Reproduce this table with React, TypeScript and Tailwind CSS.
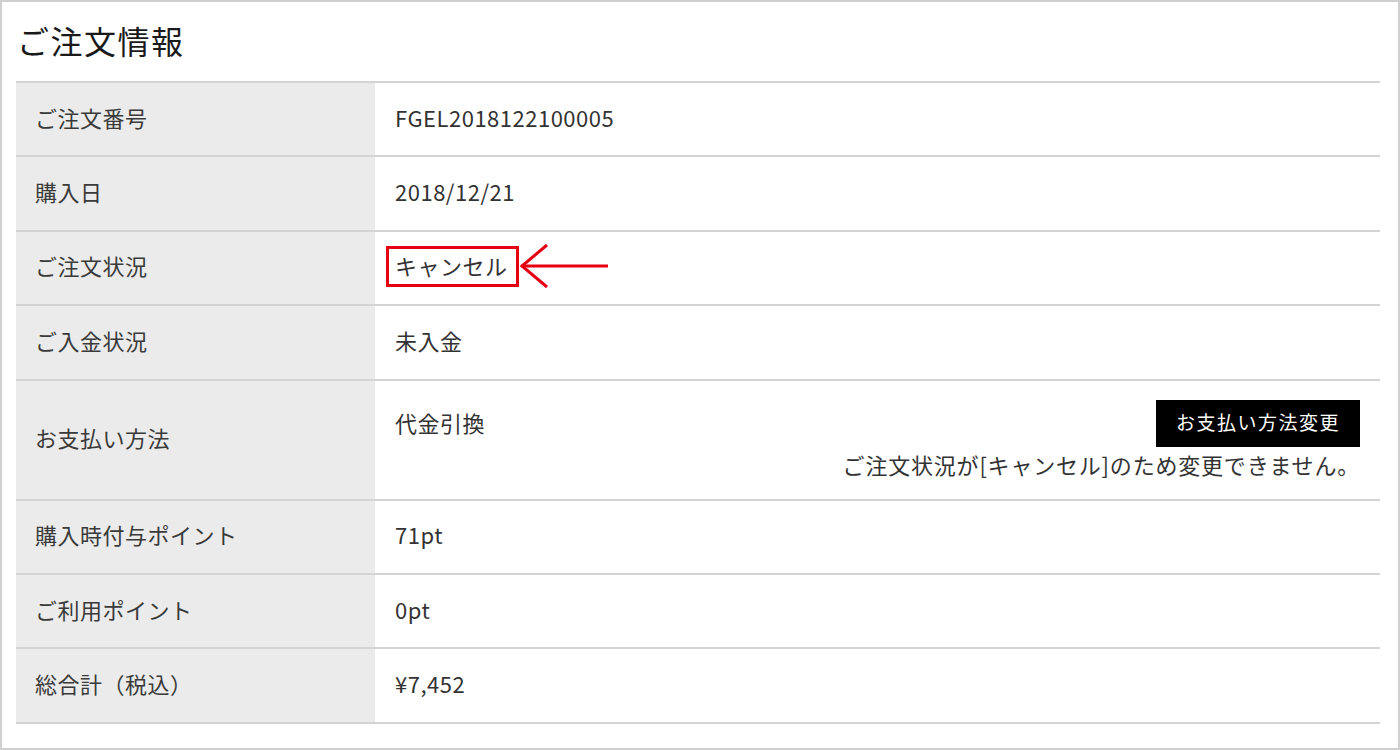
import React from "react";

const rows: { label: string; value: React.ReactNode; kind?: string }[] = [
  { label: "ご注文番号", value: "FGEL2018122100005" },
  { label: "購入日", value: "2018/12/21" },
  { label: "ご注文状況", value: "cancel", kind: "cancel" },
  { label: "ご入金状況", value: "未入金" },
  { label: "お支払い方法", value: "代金引換", kind: "pay" },
  { label: "購入時付与ポイント", value: "71pt" },
  { label: "ご利用ポイント", value: "0pt" },
  { label: "総合計（税込）", value: "¥7,452" },
];

function Row({ label, value, kind }: { label: string; value: React.ReactNode; kind?: string }) {
  const h = kind === "pay" ? "h-[120px]" : "h-[74.4px]";
  return (
    <div className={`flex ${h} border-b-2 border-[#d4d4d4]`}>
      <div className="w-[359px] shrink-0 bg-[#ebebeb] flex items-center pl-[19px] pb-[4px] text-[#3a3a3a]">{label}</div>
      {kind === "cancel" ? (
        <div className="flex-1 flex items-center pl-[20px] pb-[3px]">
          <span className="-ml-[9px] border-[3px] border-[#e50012] pl-[6px] pr-[8px] pt-[2px] pb-[4px] leading-[29px]">キャンセル</span>
          <svg width="94" height="46" viewBox="0 0 94 46" className="-ml-[2px]">
            <path d="M4 23 L91 23" stroke="#e50012" strokeWidth="3" fill="none" />
            <path d="M30 2 L5 23 L30 44" stroke="#e50012" strokeWidth="3" fill="none" />
          </svg>
        </div>
      ) : kind === "pay" ? (
        <div className="flex-1 flex justify-between pl-[20px] pr-[20px] pt-[19px]">
          <div className="leading-[45px]">{value}</div>
          <div className="flex flex-col items-end">
            <div className="bg-black text-white w-[204px] h-[47px] flex items-center justify-center pb-[2px] text-[19px] tracking-[1.5px]">お支払い方法変更</div>
            <div className="mt-[3px] leading-[28px] tracking-[0.8px]">ご注文状況が[キャンセル]のため変更できません。</div>
          </div>
        </div>
      ) : (
        <div className="flex-1 flex items-center pl-[20px] pb-[4px]">{value}</div>
      )}
    </div>
  );
}

export default function App() {
  return (
    <div
      className="w-[1400px] h-[750px] border-2 border-[#d0d0d0] bg-white text-[#333] text-[22px] tracking-[0.5px]"
      style={{ fontFamily: '"Noto Sans CJK JP", "Noto Sans", sans-serif' }}
    >
      <div className="h-[79px] flex items-center pl-[15px] pb-[4px] text-[32px] tracking-[1.5px] text-[#1a1a1a]">ご注文情報</div>
      <div className="ml-[14px] mr-[18px] border-t-2 border-[#d4d4d4]">
        {rows.map((r) => (
          <Row key={r.label} label={r.label} value={r.value} kind={r.kind} />
        ))}
      </div>
    </div>
  );
}
